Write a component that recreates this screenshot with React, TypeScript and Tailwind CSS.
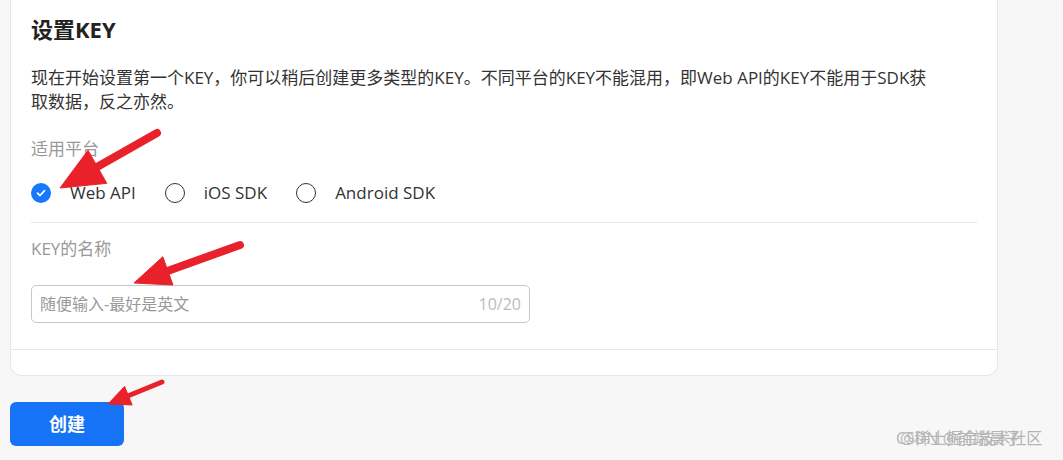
import React from 'react';

type Pt = [number, number];

// red annotation arrow drawn on top of the page
function Arrow({ tail, tip, head, half, width }: { tail: Pt; tip: Pt; head: number; half: number; width: number }) {
  const dx = tip[0] - tail[0];
  const dy = tip[1] - tail[1];
  const len = Math.hypot(dx, dy);
  const ux = dx / len;
  const uy = dy / len;
  const bx = tip[0] - ux * head;
  const by = tip[1] - uy * head;
  const nx = -uy;
  const ny = ux;
  const pts = `${tip[0]},${tip[1]} ${bx + nx * half},${by + ny * half} ${bx - nx * half},${by - ny * half}`;
  return (
    <g fill="#e8212b" stroke="#e8212b">
      <line x1={tail[0]} y1={tail[1]} x2={bx + ux * 4} y2={by + uy * 4} strokeWidth={width} strokeLinecap="round" />
      <polygon points={pts} strokeWidth={1} strokeLinejoin="round" />
    </g>
  );
}

function Radio({ label, checked }: { label: string; checked?: boolean }) {
  return (
    <label className="flex items-center gap-[19px] text-[17px] text-[#333]">
      {checked ? (
        <span className="flex h-[20px] w-[20px] items-center justify-center rounded-full bg-[#1677ff]">
          <svg width="12" height="12" viewBox="0 0 12 12" fill="none">
            <path d="M2.5 6.2 L5 8.5 L9.5 3.6" stroke="white" strokeWidth="1.8" strokeLinecap="round" strokeLinejoin="round" />
          </svg>
        </span>
      ) : (
        <span className="h-[20px] w-[20px] rounded-full border-[1.5px] border-[#333]" />
      )}
      <span>{label}</span>
    </label>
  );
}

export default function App() {
  return (
    <div className="relative h-[460px] w-full overflow-hidden bg-[#f7f7f7] px-[10px] font-['Open_Sans','Noto_Sans_CJK_SC',sans-serif]">
      <div className="w-[988px] rounded-b-[12px] border-x border-b border-[#e8e8e8] bg-white">
        <div className="px-[20px] pt-[14px]">
          <h2 className="text-[22px] font-bold leading-[30px] text-[#222]">设置KEY</h2>
          <p className="mt-[22px] w-[905px] text-[17px] leading-[24px] text-[#333]">
            现在开始设置第一个KEY，你可以稍后创建更多类型的KEY。不同平台的KEY不能混用，即Web API的KEY不能用于SDK获取数据，反之亦然。
          </p>
          <div className="mt-[23px] text-[17px] leading-[24px] text-[#999]">适用平台</div>
          <div className="mt-[20px] flex h-[24px] items-center gap-[29px]">
            <Radio label="Web API" checked />
            <Radio label="iOS SDK" />
            <Radio label="Android SDK" />
          </div>
          <div className="mt-[17px] border-t border-[#e8e8e8]" />
          <div className="mt-[14px] text-[17px] leading-[24px] text-[#999]">KEY的名称</div>
          <div className="mt-[24px] flex h-[38px] w-[499px] items-center justify-between rounded-[5px] border border-[#c8c8c8] px-[8px]">
            <span className="text-[16px] text-[#999]">随便输入-最好是英文</span>
            <span className="text-[16px] text-[#bbb]">10/20</span>
          </div>
        </div>
        <div className="mt-[26px] h-[26px] border-t border-[#e8e8e8]" />
      </div>
      <button className="mt-[26px] flex h-[44px] w-[114px] items-center justify-center rounded-[6px] bg-[#1673f5] text-[18px] font-bold text-white">
        创建
      </button>

      <div className="pointer-events-none absolute left-[896px] top-[427px] text-[16px] leading-[22px] text-[#b5b5b5]">
        <span className="absolute left-0 top-0 whitespace-nowrap">CSDN @前端晨子</span>
        <span className="absolute left-[4px] top-0 whitespace-nowrap">@稀土掘金技术社区</span>
      </div>

      <svg className="pointer-events-none absolute left-0 top-0" width="1063" height="460">
        <Arrow tail={[157, 133]} tip={[60, 188]} head={43} half={19} width={8} />
        <Arrow tail={[240, 245]} tip={[134, 283]} head={36} half={15} width={8} />
        <Arrow tail={[162, 382]} tip={[108, 404]} head={22} half={10} width={5} />
      </svg>
    </div>
  );
}
